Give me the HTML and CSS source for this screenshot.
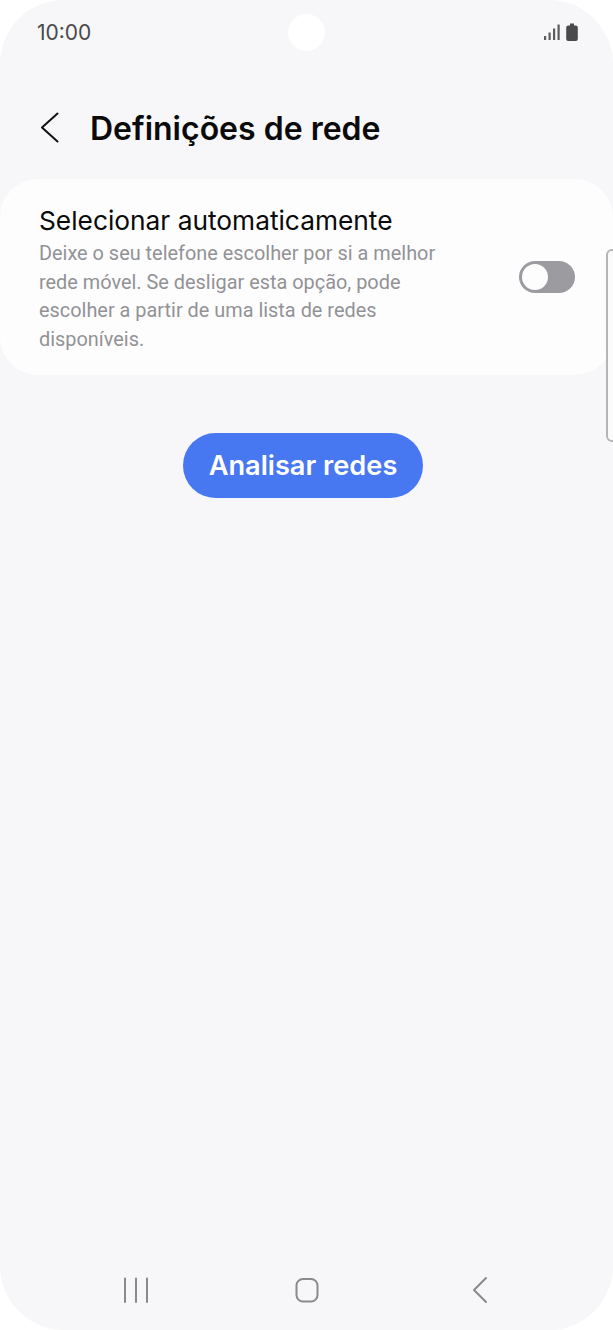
FILE: index.html
```html
<!DOCTYPE html>
<html lang="pt">
<head>
    <meta charset="UTF-8">
    <meta name="viewport" content="width=device-width, initial-scale=1.0">
    <title>Definições de rede</title>
    <link rel="stylesheet" href="styles.css">
</head>
<body>
    <div class="phone">
        <div class="statusbar">
            <span class="time">10:00</span>
            <div class="status-icons">
                <svg width="16" height="16" viewBox="0 0 16 16">
                    <rect x="0" y="12" width="2.200" height="4" fill="#5c5c5e"/>
                    <rect x="4.500" y="8.500" width="2.200" height="7.500" fill="#5c5c5e"/>
                    <rect x="9" y="4.500" width="2.200" height="11.500" fill="#5c5c5e"/>
                    <rect x="13.500" y="0.500" width="2.200" height="15.500" fill="#5c5c5e"/>
                </svg>
                <svg width="12" height="18" viewBox="0 0 12 18">
                    <path d="M4 0.500h4v2h1.800a2 2 0 0 1 2 2v11.500a2 2 0 0 1-2 2H2.200a2 2 0 0 1-2-2V4.500a2 2 0 0 1 2-2H4z" fill="#4a4a4c"/>
                </svg>
            </div>
        </div>
        <div class="camera"></div>

        <div class="header">
            <svg class="back" width="20" height="32" viewBox="0 0 20 32">
                <path d="M17.500 1.500 L2 15.500 L17.500 29.500" fill="none" stroke="#111" stroke-width="2" stroke-linecap="round" stroke-linejoin="round"/>
            </svg>
            <h1>Definições de rede</h1>
        </div>

        <div class="card">
            <div class="card-text">
                <div class="card-title">Selecionar automaticamente</div>
                <p>Deixe o seu telefone escolher por si a melhor rede móvel. Se desligar esta opção, pode escolher a partir de uma lista de redes disponíveis.</p>
            </div>
            <div class="toggle"><span class="knob"></span></div>
        </div>

        <div class="actions">
            <button class="btn">Analisar redes</button>
        </div>

        <div class="side-handle"></div>

        <div class="navbar">
            <svg width="26" height="26" viewBox="0 0 26 26">
                <path d="M2 1.500V25M13 1.500V25M24 1.500V25" fill="none" stroke="#8a8a8a" stroke-width="2" stroke-linecap="round"/>
            </svg>
            <svg class="nav-home" width="24" height="26" viewBox="0 0 24 26">
                <rect x="1.500" y="2" width="21" height="22.500" rx="6.500" fill="none" stroke="#8a8a8a" stroke-width="2"/>
            </svg>
            <svg width="16" height="28" viewBox="0 0 16 28">
                <path d="M14 2 L2 14 L14 26" fill="none" stroke="#8a8a8a" stroke-width="2" stroke-linecap="round" stroke-linejoin="round"/>
            </svg>
        </div>
    </div>
</body>
</html>
```

FILE: styles.css
```css
html, body {
    margin: 0;
    padding: 0;
    background-color: #fff;
}

body {
    font-family: "Inter", "Liberation Sans", sans-serif;
}

.phone {
    position: relative;
    display: flex;
    flex-direction: column;
    width: 613px;
    height: 1330px;
    overflow: hidden;
    border-radius: 64px;
    background-color: #f7f7f9;
}

/* Status bar */
.statusbar {
    display: flex;
    justify-content: space-between;
    align-items: center;
    height: 64px;
    padding: 0 35px 0 37px;
}

.time {
    font-size: 21px;
    color: #4a4a4c;
}

.status-icons {
    display: flex;
    align-items: center;
    gap: 6px;
}

.camera {
    position: absolute;
    left: 288px;
    top: 14px;
    width: 37px;
    height: 37px;
    border-radius: 50%;
    background-color: #fff;
}

/* Header */
.header {
    display: flex;
    align-items: center;
    gap: 30px;
    height: 64px;
    margin-top: 32px;
    padding-left: 40px;
}

.header h1 {
    margin: 0;
    font-size: 32px;
    font-weight: 600;
    color: #0a0a0a;
}

/* Card */
.card {
    display: flex;
    align-items: center;
    justify-content: space-between;
    height: 196px;
    box-sizing: border-box;
    margin-top: 19px;
    padding: 0 38px 0 39px;
    border-radius: 38px;
    background-color: #fdfdfe;
}

.card-text {
    width: 410px;
    padding-top: 3px;
}

.card-title {
    font-size: 26.300px;
    line-height: 35px;
    color: #0a0a0a;
}

.card-text p {
    margin: 2px 0 0;
    font-family: "Roboto", "Liberation Sans", sans-serif;
    font-size: 19.900px;
    line-height: 28.500px;
    color: #929296;
}

.toggle {
    display: flex;
    align-items: center;
    width: 56px;
    height: 32px;
    box-sizing: border-box;
    padding-left: 3px;
    border-radius: 16px;
    background-color: #9b9ba0;
}

.knob {
    width: 26px;
    height: 26px;
    border-radius: 50%;
    background-color: #fdfdfe;
}

/* Button */
.actions {
    display: flex;
    justify-content: center;
    margin-top: 57.500px;
    padding-right: 7px;
}

.btn {
    width: 240px;
    height: 65px;
    border: none;
    border-radius: 33px;
    background-color: #4877f2;
    color: #fff;
    font-family: inherit;
    font-size: 27.200px;
    font-weight: 600;
}

.side-handle {
    position: absolute;
    left: 606px;
    top: 249px;
    width: 20px;
    height: 193px;
    box-sizing: border-box;
    border: 2px solid #b5b5b8;
    border-radius: 6px;
    background-color: #fbfbfc;
}

/* Bottom nav */
.navbar {
    display: flex;
    justify-content: space-between;
    align-items: center;
    margin-top: auto;
    height: 80px;
    padding: 0 125px 0 123px;
}

.nav-home {
    margin-right: 8px;
}
```
